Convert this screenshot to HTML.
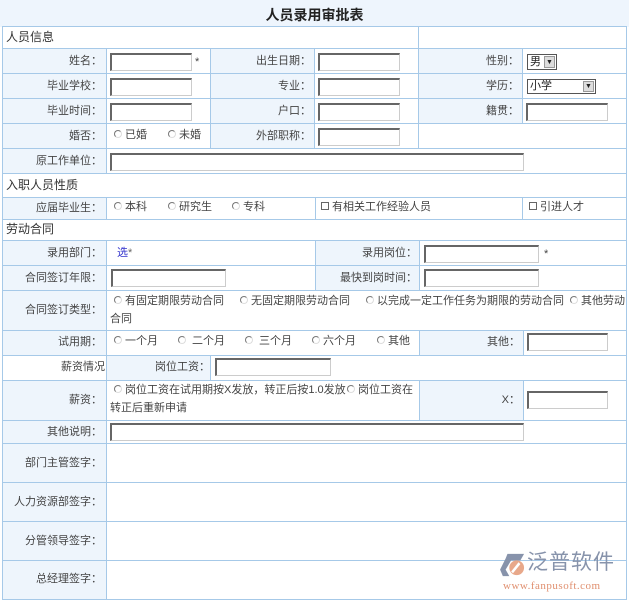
<!DOCTYPE html>
<html><head><meta charset="utf-8"><style>
*{margin:0;padding:0;box-sizing:border-box}
body{width:629px;height:600px;overflow:hidden;background:#fff;font-family:"Liberation Sans","Noto Sans CJK SC",sans-serif;font-size:11px;color:#444;position:relative}
.c{position:absolute;border:1px solid #a6c9e8;background:#fff}
.l{background:#eef5fc}
.t{position:absolute;white-space:nowrap;line-height:13px}
.i{position:absolute;height:18px;background:#fff;border:1px solid #ccc;border-top:2px solid #666;border-left:2px solid #666}
.r{display:inline-block;width:8px;height:8px;border-radius:50%;border:1px solid #777;border-right-color:#ddd;border-bottom-color:#ddd;margin-right:3px;vertical-align:0px}
.k{display:inline-block;width:8px;height:8px;border:1px solid #666;margin-right:3px;vertical-align:0px}
.h{font-size:12px;color:#333}
</style></head><body>
<div style="position:absolute;left:0;top:0;width:629px;height:27px;background:#eef5fd"></div>
<div class="t" style="left:0;width:629px;text-align:center;top:8px;font-size:14px;font-weight:bold;color:#222;line-height:15px">人员录用审批表</div>

<div class="c" style="left:2px;top:26px;width:418px;height:24px"></div>
<div class="c" style="left:418px;top:26px;width:209px;height:24px"></div>
<div class="t h" style="left:6px;top:31px">人员信息</div>

<div class="c l" style="left:2px;top:48px;width:106px;height:27px"></div>
<div class="c" style="left:106px;top:48px;width:106px;height:27px"></div>
<div class="c l" style="left:210px;top:48px;width:106px;height:27px"></div>
<div class="c" style="left:314px;top:48px;width:106px;height:27px"></div>
<div class="c l" style="left:418px;top:48px;width:106px;height:27px"></div>
<div class="c" style="left:522px;top:48px;width:105px;height:27px"></div>

<div class="c l" style="left:2px;top:73px;width:106px;height:27px"></div>
<div class="c" style="left:106px;top:73px;width:106px;height:27px"></div>
<div class="c l" style="left:210px;top:73px;width:106px;height:27px"></div>
<div class="c" style="left:314px;top:73px;width:106px;height:27px"></div>
<div class="c l" style="left:418px;top:73px;width:106px;height:27px"></div>
<div class="c" style="left:522px;top:73px;width:105px;height:27px"></div>

<div class="c l" style="left:2px;top:98px;width:106px;height:27px"></div>
<div class="c" style="left:106px;top:98px;width:106px;height:27px"></div>
<div class="c l" style="left:210px;top:98px;width:106px;height:27px"></div>
<div class="c" style="left:314px;top:98px;width:106px;height:27px"></div>
<div class="c l" style="left:418px;top:98px;width:106px;height:27px"></div>
<div class="c" style="left:522px;top:98px;width:105px;height:27px"></div>

<div class="c l" style="left:2px;top:123px;width:106px;height:27px"></div>
<div class="c" style="left:106px;top:123px;width:106px;height:27px"></div>
<div class="c l" style="left:210px;top:123px;width:106px;height:27px"></div>
<div class="c" style="left:314px;top:123px;width:106px;height:27px"></div>
<div class="c" style="left:418px;top:123px;width:209px;height:27px"></div>

<div class="c l" style="left:2px;top:148px;width:106px;height:27px"></div>
<div class="c" style="left:106px;top:148px;width:521px;height:27px"></div>

<div class="t" style="right:527px;top:55px">姓名：</div>
<div class="t" style="right:527px;top:80px">毕业学校：</div>
<div class="t" style="right:527px;top:105px">毕业时间：</div>
<div class="t" style="right:527px;top:130px">婚否：</div>
<div class="t" style="right:527px;top:155px">原工作单位：</div>
<div class="t" style="right:318px;top:55px">出生日期：</div>
<div class="t" style="right:318px;top:80px">专业：</div>
<div class="t" style="right:318px;top:105px">户口：</div>
<div class="t" style="right:318px;top:130px">外部职称：</div>
<div class="t" style="right:110px;top:55px">性别：</div>
<div class="t" style="right:110px;top:80px">学历：</div>
<div class="t" style="right:110px;top:105px">籍贯：</div>

<div class="i" style="left:110px;top:53px;width:82px"></div>
<div class="t" style="left:195px;top:56px">*</div>
<div class="i" style="left:110px;top:78px;width:82px"></div>
<div class="i" style="left:110px;top:103px;width:82px"></div>
<div class="t" style="left:114px;top:129px"><span class="r"></span>已婚</div>
<div class="t" style="left:168px;top:129px"><span class="r"></span>未婚</div>
<div class="i" style="left:110px;top:153px;width:414px"></div>
<div class="i" style="left:318px;top:53px;width:82px"></div>
<div class="i" style="left:318px;top:78px;width:82px"></div>
<div class="i" style="left:318px;top:103px;width:82px"></div>
<div class="i" style="left:318px;top:128px;width:82px"></div>
<div style="position:absolute;left:527px;top:54px;width:30px;height:16px;border:1px solid #555;background:#fff;line-height:14px;padding-left:2px;color:#222">男<span style="position:absolute;right:1px;top:1px;width:11px;height:12px;background:#ddd;border:1px solid #999;font-size:7px;line-height:11px;text-align:center">▼</span></div>
<div style="position:absolute;left:527px;top:79px;width:69px;height:15px;border:1px solid #555;background:#fff;line-height:13px;padding-left:2px;color:#222">小学<span style="position:absolute;right:1px;top:1px;width:11px;height:11px;background:#ddd;border:1px solid #999;font-size:7px;line-height:10px;text-align:center">▼</span></div>
<div class="i" style="left:526px;top:103px;width:82px"></div>

<div class="c" style="left:2px;top:173px;width:625px;height:26px"></div>
<div class="t h" style="left:6px;top:179px">入职人员性质</div>
<div class="c l" style="left:2px;top:197px;width:106px;height:24px"></div>
<div class="c" style="left:106px;top:197px;width:211px;height:24px"></div>
<div class="c" style="left:315px;top:197px;width:209px;height:24px"></div>
<div class="c" style="left:522px;top:197px;width:105px;height:24px"></div>
<div class="t" style="right:527px;top:202px">应届毕业生：</div>
<div class="t" style="left:114px;top:201px"><span class="r"></span>本科</div>
<div class="t" style="left:168px;top:201px"><span class="r"></span>研究生</div>
<div class="t" style="left:232px;top:201px"><span class="r"></span>专科</div>
<div class="t" style="left:321px;top:201px"><span class="k"></span>有相关工作经验人员</div>
<div class="t" style="left:529px;top:201px"><span class="k"></span>引进人才</div>

<div class="c" style="left:2px;top:219px;width:625px;height:23px"></div>
<div class="t h" style="left:6px;top:223px">劳动合同</div>
<div class="c l" style="left:2px;top:240px;width:106px;height:27px"></div>
<div class="c" style="left:106px;top:240px;width:211px;height:27px"></div>
<div class="c l" style="left:315px;top:240px;width:106px;height:27px"></div>
<div class="c" style="left:419px;top:240px;width:208px;height:27px"></div>
<div class="c l" style="left:2px;top:265px;width:106px;height:27px"></div>
<div class="c" style="left:106px;top:265px;width:211px;height:27px"></div>
<div class="c l" style="left:315px;top:265px;width:106px;height:27px"></div>
<div class="c" style="left:419px;top:265px;width:208px;height:27px"></div>
<div class="t" style="right:527px;top:247px">录用部门：</div>
<div class="t" style="left:117px;top:247px;color:#33c">选<span style="color:#666">*</span></div>
<div class="t" style="right:212px;top:247px">录用岗位：</div>
<div class="i" style="left:424px;top:245px;width:115px"></div>
<div class="t" style="left:544px;top:248px">*</div>
<div class="t" style="right:527px;top:272px">合同签订年限：</div>
<div class="i" style="left:111px;top:269px;width:115px"></div>
<div class="t" style="right:212px;top:272px">最快到岗时间：</div>
<div class="i" style="left:424px;top:269px;width:115px"></div>

<div class="c l" style="left:2px;top:290px;width:106px;height:42px"></div>
<div class="c" style="left:106px;top:290px;width:521px;height:42px"></div>
<div class="t" style="right:527px;top:304px">合同签订类型：</div>
<div class="t" style="left:114px;top:295px"><span class="r"></span>有固定期限劳动合同</div>
<div class="t" style="left:240px;top:295px"><span class="r"></span>无固定期限劳动合同</div>
<div class="t" style="left:366px;top:295px"><span class="r"></span>以完成一定工作任务为期限的劳动合同</div>
<div class="t" style="left:570px;top:295px"><span class="r"></span>其他劳动</div>
<div class="t" style="left:110px;top:313px">合同</div>

<div class="c l" style="left:2px;top:330px;width:106px;height:27px"></div>
<div class="c" style="left:106px;top:330px;width:315px;height:27px"></div>
<div class="c l" style="left:419px;top:330px;width:106px;height:27px"></div>
<div class="c" style="left:523px;top:330px;width:104px;height:27px"></div>
<div class="t" style="right:527px;top:336px">试用期：</div>
<div class="t" style="left:114px;top:335px"><span class="r"></span>一个月</div>
<div class="t" style="left:178px;top:335px"><span class="r"></span> 二个月</div>
<div class="t" style="left:245px;top:335px"><span class="r"></span> 三个月</div>
<div class="t" style="left:312px;top:335px"><span class="r"></span>六个月</div>
<div class="t" style="left:377px;top:335px"><span class="r"></span>其他</div>
<div class="t" style="right:109px;top:336px">其他：</div>
<div class="i" style="left:527px;top:333px;width:81px"></div>

<div class="c" style="left:2px;top:355px;width:106px;height:27px"></div>
<div class="c l" style="left:106px;top:355px;width:106px;height:27px"></div>
<div class="c" style="left:210px;top:355px;width:417px;height:27px"></div>
<div class="t" style="right:524px;top:361px">薪资情况</div>
<div class="t" style="right:419px;top:361px">岗位工资：</div>
<div class="i" style="left:215px;top:358px;width:116px"></div>

<div class="c l" style="left:2px;top:380px;width:106px;height:42px"></div>
<div class="c" style="left:106px;top:380px;width:315px;height:42px"></div>
<div class="c l" style="left:419px;top:380px;width:106px;height:42px"></div>
<div class="c" style="left:523px;top:380px;width:104px;height:42px"></div>
<div class="t" style="right:527px;top:394px">薪资：</div>
<div class="t" style="left:114px;top:384px"><span class="r"></span>岗位工资在试用期按X发放，转正后按1.0发放</div>
<div class="t" style="left:347px;top:384px"><span class="r"></span>岗位工资在</div>
<div class="t" style="left:110px;top:402px">转正后重新申请</div>
<div class="t" style="right:109px;top:394px">X：</div>
<div class="i" style="left:527px;top:391px;width:81px"></div>

<div class="c l" style="left:2px;top:420px;width:106px;height:25px"></div>
<div class="c" style="left:106px;top:420px;width:521px;height:25px"></div>
<div class="t" style="right:527px;top:426px">其他说明：</div>
<div class="i" style="left:110px;top:423px;width:414px"></div>

<div class="c l" style="left:2px;top:443px;width:106px;height:41px"></div>
<div class="c" style="left:106px;top:443px;width:521px;height:41px"></div>
<div class="t" style="right:527px;top:457px">部门主管签字：</div>
<div class="c l" style="left:2px;top:482px;width:106px;height:41px"></div>
<div class="c" style="left:106px;top:482px;width:521px;height:41px"></div>
<div class="t" style="right:527px;top:496px">人力资源部签字：</div>
<div class="c l" style="left:2px;top:521px;width:106px;height:41px"></div>
<div class="c" style="left:106px;top:521px;width:521px;height:41px"></div>
<div class="t" style="right:527px;top:535px">分管领导签字：</div>
<div class="c l" style="left:2px;top:560px;width:106px;height:40px"></div>
<div class="c" style="left:106px;top:560px;width:521px;height:40px"></div>
<div class="t" style="right:527px;top:573px">总经理签字：</div>

<svg style="position:absolute;left:500px;top:553px" width="26" height="24" viewBox="0 0 28 26">
<path d="M8 1 L26 1 L22 8 L12 8 L6 18 L10 25 L3 25 L0 18 L6 6 Z" fill="#8793ab"/>
<circle cx="18" cy="16" r="8" fill="#e8a88a"/>
<path d="M12 20 L20 10 L22 12 L14 22 Z" fill="#fff"/>
</svg>
<div class="t" style="left:527px;top:552px;font-size:21px;line-height:22px;color:#8793ab;letter-spacing:1px">泛普软件</div>
<div class="t" style="left:503px;top:580px;font-family:'Liberation Serif',serif;font-size:11px;color:#e09070;letter-spacing:0.5px">www.fanpusoft.com</div>
</body></html>
